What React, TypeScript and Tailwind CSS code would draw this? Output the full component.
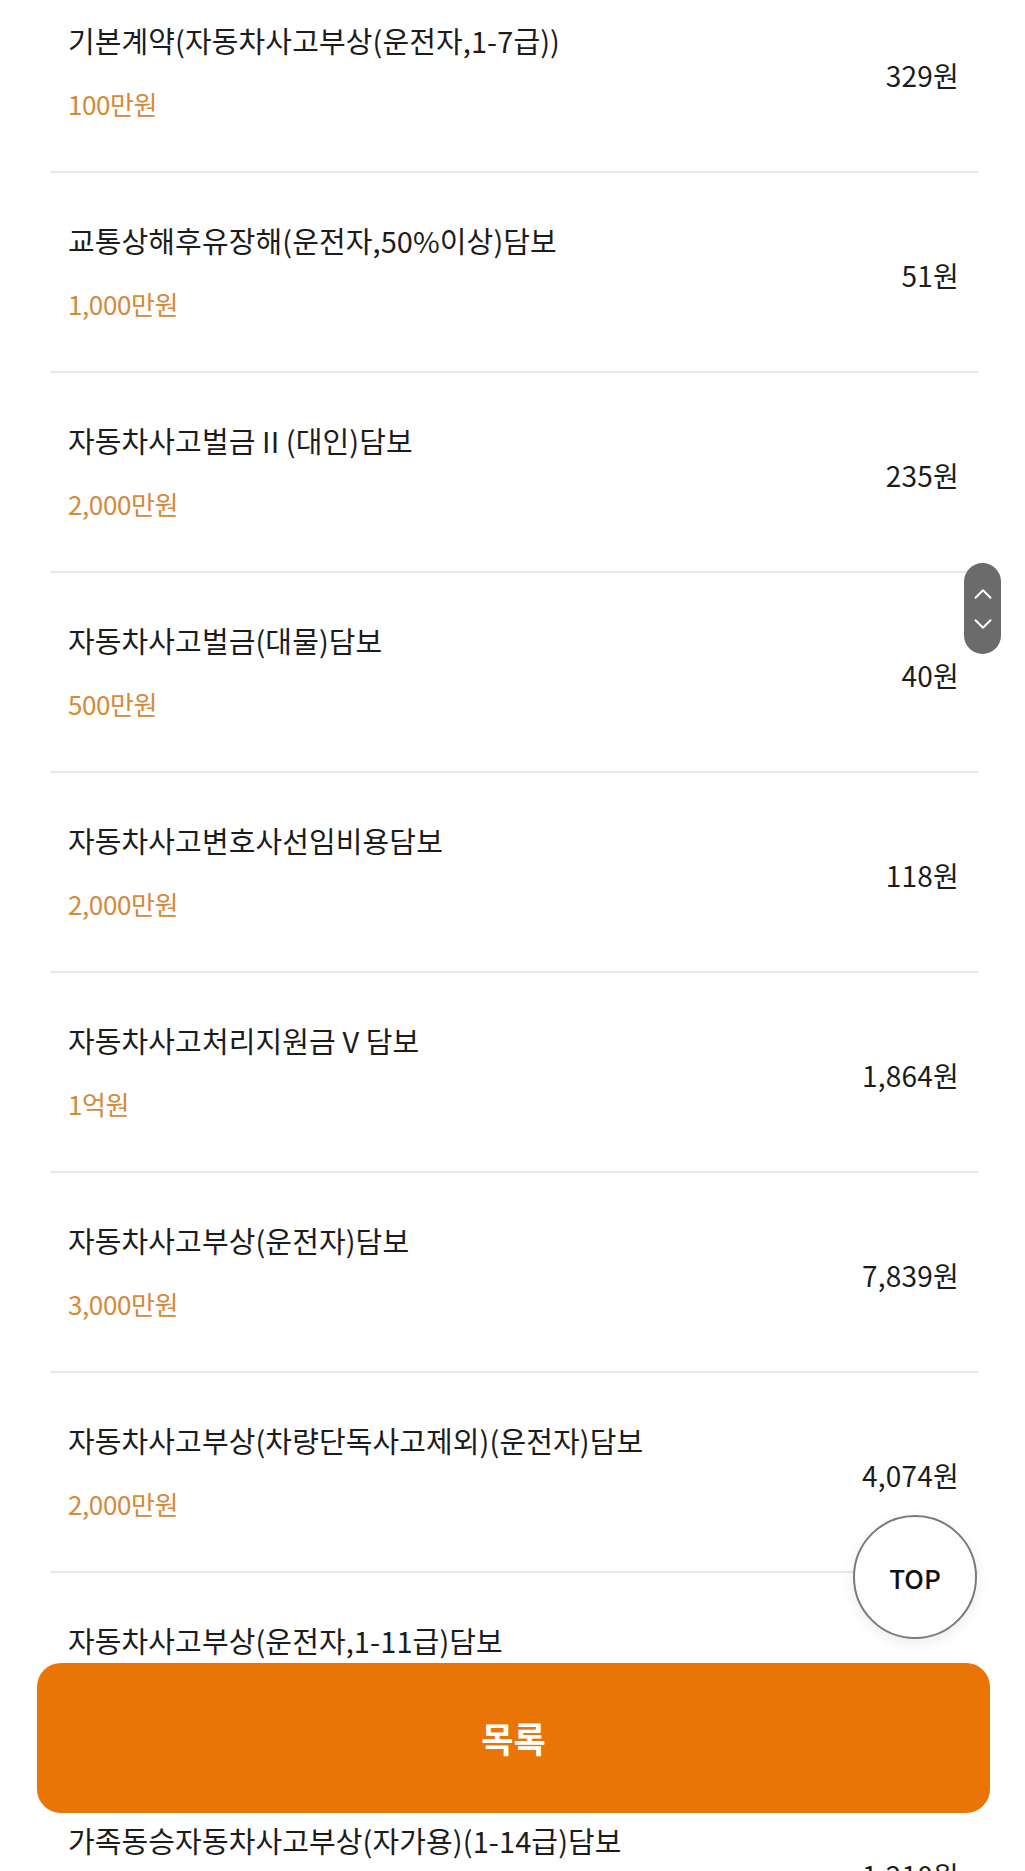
import { ChevronDown, ChevronUp } from "lucide-react";

type Coverage = {
  name: string;
  amount: string;
  premium: string;
};

const coverages: Coverage[] = [
  { name: "기본계약(자동차사고부상(운전자,1-7급))", amount: "100만원", premium: "329원" },
  { name: "교통상해후유장해(운전자,50%이상)담보", amount: "1,000만원", premium: "51원" },
  { name: "자동차사고벌금 II (대인)담보", amount: "2,000만원", premium: "235원" },
  { name: "자동차사고벌금(대물)담보", amount: "500만원", premium: "40원" },
  { name: "자동차사고변호사선임비용담보", amount: "2,000만원", premium: "118원" },
  { name: "자동차사고처리지원금 V 담보", amount: "1억원", premium: "1,864원" },
  { name: "자동차사고부상(운전자)담보", amount: "3,000만원", premium: "7,839원" },
  { name: "자동차사고부상(차량단독사고제외)(운전자)담보", amount: "2,000만원", premium: "4,074원" },
  { name: "자동차사고부상(운전자,1-11급)담보", amount: "2,000만원", premium: "1,734원" },
  { name: "가족동승자동차사고부상(자가용)(1-14급)담보", amount: "1,000만원", premium: "1,210원" },
];

function CoverageRow({ item }: { item: Coverage }) {
  return (
    <li className="flex h-[200px] items-center justify-between border-b-2 border-[#e8e8e8] pl-[18px] pr-[19px]">
      <div className="flex flex-col gap-[28px]">
        <span className="text-[29px] leading-[36px] tracking-[0.1px] text-[#1c1c1c]">{item.name}</span>
        <span className="text-[26px] leading-[36px] tracking-[-0.4px] text-[#d58a38]">{item.amount}</span>
      </div>
      <span className="mt-[6px] text-[28px] leading-[36px] tracking-[0.2px] text-[#1c1c1c]">{item.premium}</span>
    </li>
  );
}

export default function App() {
  return (
    <div
      className="relative h-[1871px] w-full overflow-hidden bg-white"
      style={{ fontFamily: '"Noto Sans CJK KR", "Noto Sans", sans-serif' }}
    >
      <ul className="mt-[-27px] ml-[50px] mr-[47px]">
        {coverages.map((c) => (
          <CoverageRow key={c.name} item={c} />
        ))}
      </ul>

      {/* scroll pager */}
      <div className="absolute left-[964px] top-[563px] flex h-[91px] w-[37px] flex-col items-center justify-center rounded-full bg-[#6b6b6b] text-white">
        <ChevronUp className="h-[30px] w-[30px]" strokeWidth={1.6} />
        <ChevronDown className="h-[30px] w-[30px]" strokeWidth={1.6} />
      </div>

      <button className="absolute left-[853px] top-[1515px] flex h-[124px] w-[124px] items-center justify-center rounded-full border-2 border-[#7a7a7a] bg-white text-[26px] font-medium text-[#111] shadow-[0_4px_14px_rgba(0,0,0,0.08)]">
        TOP
      </button>

      <button className="absolute left-[37px] top-[1663px] flex h-[150px] w-[953px] items-center justify-center rounded-[24px] bg-[#e97507] text-[35px] font-bold text-white">
        목록
      </button>
    </div>
  );
}
